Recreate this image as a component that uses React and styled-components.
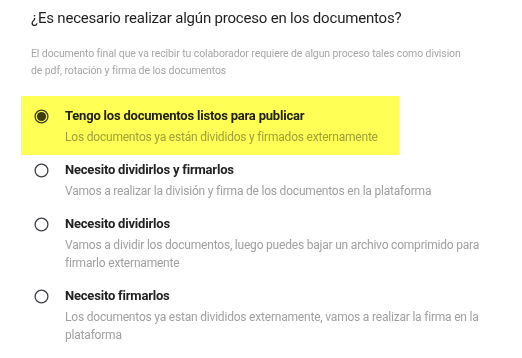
import styled, { createGlobalStyle, css } from 'styled-components';

const GlobalStyle = createGlobalStyle`
  body {
    margin: 0;
    background: #fff;
    font-family: Roboto, 'Noto Sans', Arial, sans-serif;
  }
`;

const Page = styled.div`
  padding: 8px 20px 0 31px;
`;

const Title = styled.h2`
  margin: 0;
  font-size: 15px;
  line-height: 20px;
  font-weight: 400;
  letter-spacing: -0.2px;
  color: #1f1f1f;
`;

const Intro = styled.p`
  margin: 17px 0 0;
  max-width: 430px;
  font-size: 10.5px;
  line-height: 17px;
  letter-spacing: -0.1px;
  color: #a6a6a6;
`;

const OptionList = styled.div`
  margin-top: 27px;
  display: flex;
  flex-direction: column;
  gap: 14px;
`;

const Option = styled.label`
  position: relative;
  display: grid;
  grid-template-columns: 15px 1fr;
  column-gap: 16px;
  padding-left: 3px;
  cursor: pointer;

  ${(p) =>
    p.$marked &&
    css`
      &::after {
        content: '';
        position: absolute;
        left: -10px;
        top: -10px;
        bottom: -9px;
        width: 378px;
        background: #ffff55;
        mix-blend-mode: multiply;
        pointer-events: none;
      }
    `}
`;

const RadioIcon = styled.svg`
  width: 15px;
  height: 15px;
  margin-top: 2.5px;
`;

const OptionTitle = styled.div`
  font-size: 13px;
  line-height: 20px;
  font-weight: 700;
  letter-spacing: -0.2px;
  color: #212121;
`;

const OptionText = styled.div`
  grid-column: 2;
  margin-top: 2px;
  max-width: 420px;
  font-size: 12px;
  line-height: 18px;
  letter-spacing: -0.2px;
  color: #a0a0a0;
`;

const Radio = ({ checked }) => (
  <RadioIcon viewBox="0 0 15 15">
    <circle cx="7.5" cy="7.5" r="6.4" fill="none" stroke="#3d3d45" strokeWidth="1.3" />
    {checked && <circle cx="7.5" cy="7.5" r="4.6" fill="#3d3a30" />}
  </RadioIcon>
);

const options = [
  {
    title: 'Tengo los documentos listos para publicar',
    text: 'Los documentos ya están divididos y firmados externamente',
  },
  {
    title: 'Necesito dividirlos y firmarlos',
    text: 'Vamos a realizar la división y firma de los documentos en la plataforma',
  },
  {
    title: 'Necesito dividirlos',
    text: 'Vamos a dividir los documentos, luego puedes bajar un archivo comprimido para firmarlo externamente',
  },
  {
    title: 'Necesito firmarlos',
    text: 'Los documentos ya estan divididos externamente, vamos a realizar la firma en la plataforma',
  },
];

export default function App() {
  const selected = 0;
  return (
    <>
      <GlobalStyle />
      <Page>
        <Title>¿Es necesario realizar algún proceso en los documentos?</Title>
        <Intro>
          El documento final que va recibir tu colaborador requiere de algun proceso tales como
          division de pdf, rotación y firma de los documentos
        </Intro>
        <OptionList>
          {options.map((o, i) => (
            <Option key={o.title} $marked={i === selected}>
              <Radio checked={i === selected} />
              <OptionTitle>{o.title}</OptionTitle>
              <OptionText>{o.text}</OptionText>
            </Option>
          ))}
        </OptionList>
      </Page>
    </>
  );
}
